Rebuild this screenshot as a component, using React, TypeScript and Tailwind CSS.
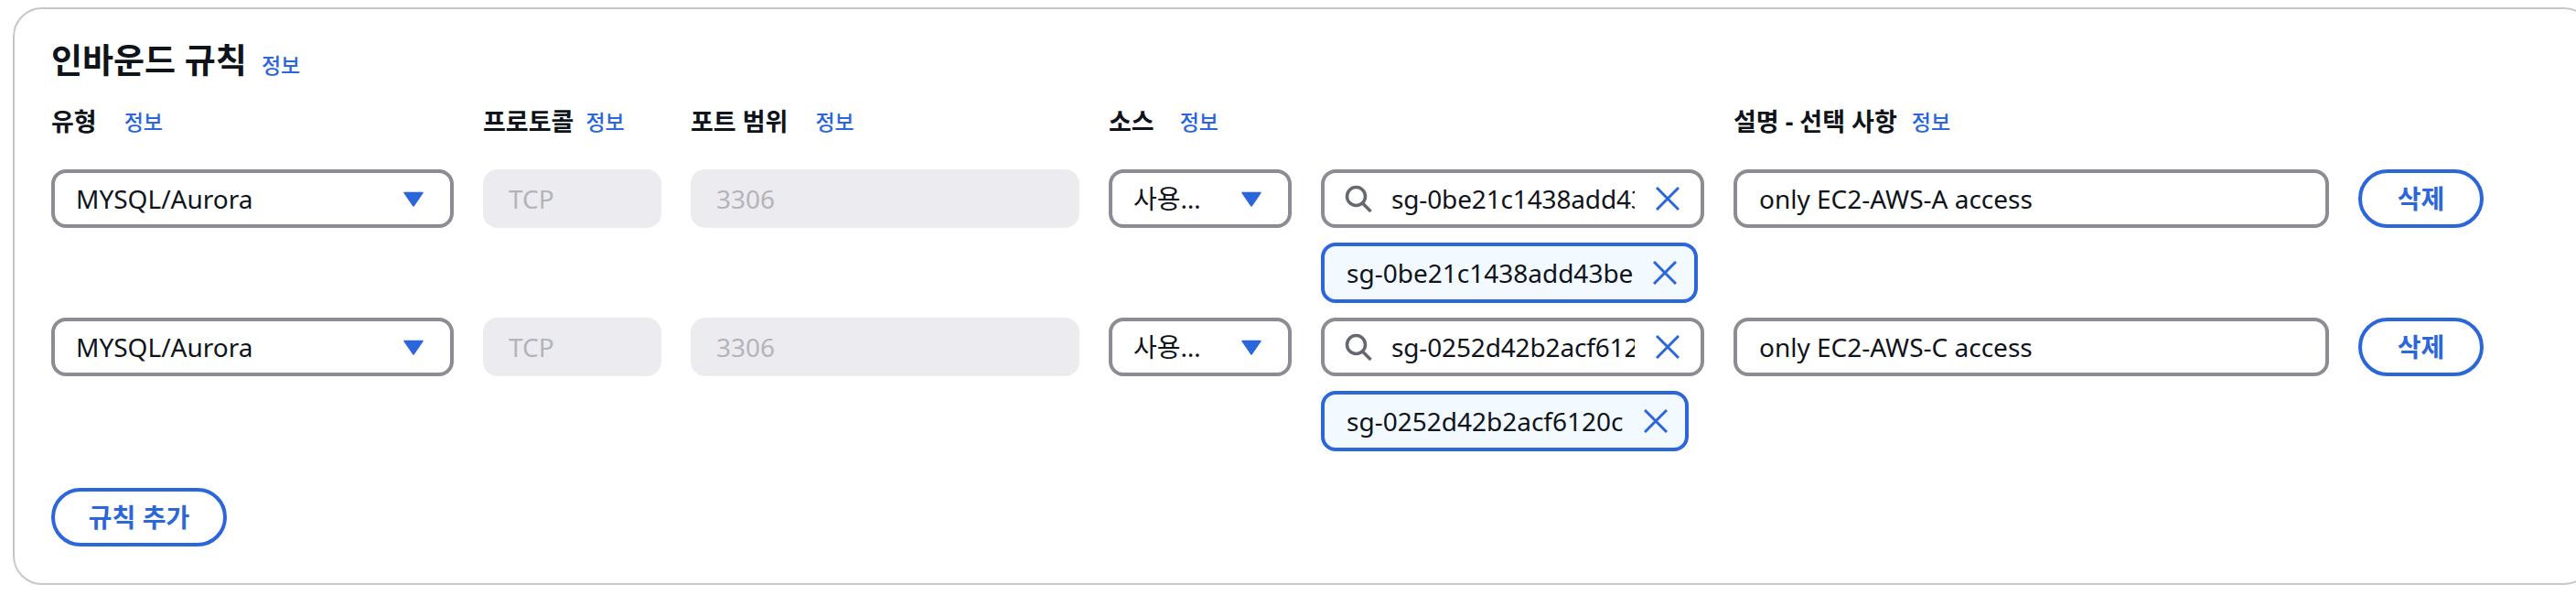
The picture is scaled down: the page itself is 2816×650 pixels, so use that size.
const FONT = "font-['Noto_Sans','Noto_Sans_CJK_KR',sans-serif]"

function Info({ className = '' }: { className?: string }) {
  return <span className={`text-[23px] leading-[32px] font-medium text-[#2b66da] ${className}`}>정보</span>
}

function Label({ text, gap }: { text: string; gap: string }) {
  return (
    <div className={`flex items-center ${gap} h-[32px]`}>
      <span className="text-[27px] leading-[32px] font-bold text-[#0f141a]">{text}</span>
      <Info />
    </div>
  )
}

function Caret() {
  return (
    <svg width="22" height="17" viewBox="0 0 22 17" className="shrink-0">
      <path d="M1 1.5h20L11 16z" fill="#2b66da" stroke="#2b66da" strokeWidth="1.5" strokeLinejoin="round" />
    </svg>
  )
}

function Close() {
  return (
    <svg width="26" height="26" viewBox="0 0 26 26" className="shrink-0" fill="none" stroke="#2b66da" strokeWidth="3">
      <path d="M1 1l24 24M25 1L1 25" />
    </svg>
  )
}

function Search() {
  return (
    <svg width="30" height="30" viewBox="0 0 30 30" className="shrink-0" fill="none" stroke="#656871" strokeWidth="3.5">
      <circle cx="12.5" cy="12.5" r="10" />
      <path d="M19.5 20l9 9" />
    </svg>
  )
}

function Select({ value }: { value: string }) {
  return (
    <div className="h-[64px] border-[4px] border-[#8c8c94] rounded-[16px] bg-white flex items-center justify-between pl-[23px] pr-[29px]">
      <span className="text-[28px] text-[#0f141a]">{value}</span>
      <Caret />
    </div>
  )
}

function Disabled({ value }: { value: string }) {
  return (
    <div className="h-[64px] rounded-[16px] bg-[#ebebf0] flex items-center px-[28px]">
      <span className="text-[28px] text-[#b4b4bb]">{value}</span>
    </div>
  )
}

function SearchBox({ value }: { value: string }) {
  return (
    <div className="h-[64px] border-[4px] border-[#8c8c94] rounded-[16px] bg-white flex items-center pl-[22px]">
      <Search />
      <span className="ml-[21px] w-[266px] overflow-hidden whitespace-nowrap tracking-[-0.15px] text-[28px] text-[#0f141a]">{value}</span>
      <span className="ml-[23px]"><Close /></span>
    </div>
  )
}

function Token({ value }: { value: string }) {
  return (
    <div className="mt-[16px] w-fit h-[66px] border-[4px] border-[#2b66da] rounded-[16px] bg-[#f2f9ff] flex items-center gap-[22px] pl-[24px] pr-[19px]">
      <span className="text-[28px] text-[#0f141a] whitespace-nowrap">{value}</span>
      <Close />
    </div>
  )
}

function Button({ text, width }: { text: string; width: string }) {
  return (
    <button className={`h-[64px] ${width} border-[4px] border-[#2b66da] rounded-full bg-white text-[28px] font-bold text-[#2b66da]`}>
      {text}
    </button>
  )
}

const rules = [
  { sg: 'sg-0be21c1438add43be', desc: 'only EC2-AWS-A access' },
  { sg: 'sg-0252d42b2acf6120c', desc: 'only EC2-AWS-C access' },
]

export default function App() {
  return (
    <div className={`h-[650px] overflow-hidden bg-white pt-[8px] pl-[14px] ${FONT}`}>
      <div className="w-[2821px] h-[631px] border-2 border-[#c6c6cd] rounded-[32px] pt-[34px] pl-[40px]">
        <div className="flex items-baseline gap-[16px]">
          <h2 className="text-[37px] leading-[44px] font-bold text-[#0f141a]">인바운드 규칙</h2>
          <Info />
        </div>
        <div className="mt-[29px] grid grid-cols-[440px_195px_425px_200px_419px_651px_137px] gap-x-[32px] items-start">
          <Label text="유형" gap="gap-[30px]" />
          <Label text="프로토콜" gap="gap-[13px]" />
          <Label text="포트 범위" gap="gap-[30px]" />
          <div className="col-span-2"><Label text="소스" gap="gap-[28px]" /></div>
          <Label text="설명 - 선택 사항" gap="gap-[16px]" />
          <div />
          {rules.map((r, i) => (
            <div key={r.sg} className={`col-span-7 grid grid-cols-subgrid items-start ${i === 0 ? 'mt-[36px]' : 'mt-[16px]'}`}>
              <Select value="MYSQL/Aurora" />
              <Disabled value="TCP" />
              <Disabled value="3306" />
              <Select value="사용…" />
              <div>
                <SearchBox value={r.sg} />
                <Token value={r.sg} />
              </div>
              <div className="h-[64px] border-[4px] border-[#8c8c94] rounded-[16px] bg-white flex items-center px-[24px]">
                <span className="text-[28px] text-[#0f141a]">{r.desc}</span>
              </div>
              <Button text="삭제" width="w-[137px]" />
            </div>
          ))}
        </div>
        <div className="mt-[40px]">
          <Button text="규칙 추가" width="w-[192px]" />
        </div>
      </div>
    </div>
  )
}
